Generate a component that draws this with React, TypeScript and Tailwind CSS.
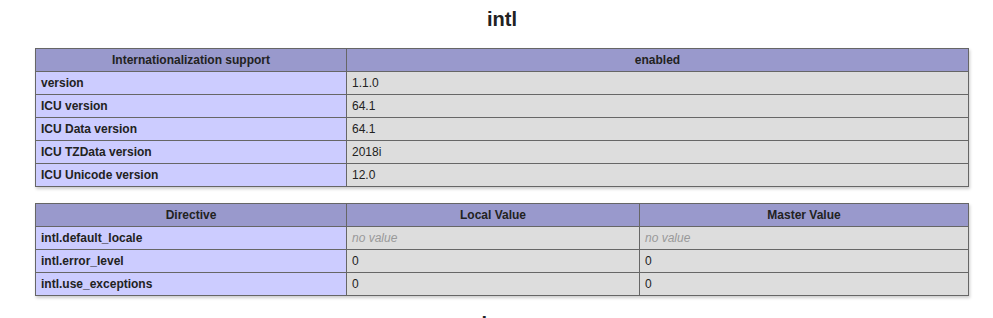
import React from "react";

const td = "border border-[#666] px-[5px] py-[4px] text-[12px] leading-[14px] align-baseline";
const e = `${td} bg-[#ccf] font-bold text-left`;
const v = `${td} bg-[#ddd] text-left`;
const h = `${td} bg-[#99c] font-bold text-center`;

export default function App() {
  const rows1: [string, string][] = [
    ["version", "1.1.0"],
    ["ICU version", "64.1"],
    ["ICU Data version", "64.1"],
    ["ICU TZData version", "2018i"],
    ["ICU Unicode version", "12.0"],
  ];
  const rows2: [string, string | null, string | null][] = [
    ["intl.default_locale", null, null],
    ["intl.error_level", "0", "0"],
    ["intl.use_exceptions", "0", "0"],
  ];
  return (
    <div className="bg-white text-[#222] font-['Liberation_Sans',Arial,sans-serif] h-[318px] overflow-hidden">
      <div className="ml-[35px] w-[934px]">
        <h2 className="text-[20px] leading-[23px] font-bold text-center pt-[8px] mb-[17px]">intl</h2>
        <table className="w-[933px] table-fixed border-collapse shadow-[1px_2px_3px_#ccc]">
          <colgroup>
            <col className="w-[311px]" />
            <col className="w-[622px]" />
          </colgroup>
          <thead>
            <tr>
              <th className={h}>Internationalization support</th>
              <th className={h}>enabled</th>
            </tr>
          </thead>
          <tbody>
            {rows1.map(([a, b]) => (
              <tr key={a}>
                <td className={e}>{a}</td>
                <td className={v}>{b}</td>
              </tr>
            ))}
          </tbody>
        </table>
        <table className="mt-[16px] w-[933px] table-fixed border-collapse shadow-[1px_2px_3px_#ccc]">
          <colgroup>
            <col className="w-[311px]" />
            <col className="w-[293px]" />
            <col className="w-[329px]" />
          </colgroup>
          <thead>
            <tr>
              <th className={h}>Directive</th>
              <th className={h}>Local Value</th>
              <th className={h}>Master Value</th>
            </tr>
          </thead>
          <tbody>
            {rows2.map(([a, b, c]) => (
              <tr key={a}>
                <td className={e}>{a}</td>
                <td className={v}>{b === null ? <i className="text-[#999]">no value</i> : b}</td>
                <td className={v}>{c === null ? <i className="text-[#999]">no value</i> : c}</td>
              </tr>
            ))}
          </tbody>
        </table>
        <h2 className="text-[20px] leading-[23px] font-bold text-center mt-[17px]">json</h2>
      </div>
    </div>
  );
}
